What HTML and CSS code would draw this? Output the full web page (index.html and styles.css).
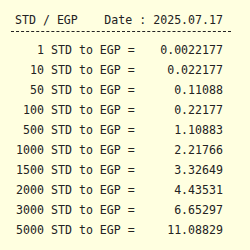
FILE: index.html
```html
<!DOCTYPE html>
<html>
<head>
<meta charset="utf-8">
<link rel="stylesheet" href="styles.css">
</head>
<body>
<div class="box">
  <div class="head">
    <span>STD / EGP</span>
    <span>Date : 2025.07.17</span>
  </div>
  <table class="rates">
    <tr><td class="amt">1</td><td class="lbl">STD to EGP =</td><td class="val">0.0022177</td></tr>
    <tr><td class="amt">10</td><td class="lbl">STD to EGP =</td><td class="val">0.022177</td></tr>
    <tr><td class="amt">50</td><td class="lbl">STD to EGP =</td><td class="val">0.11088</td></tr>
    <tr><td class="amt">100</td><td class="lbl">STD to EGP =</td><td class="val">0.22177</td></tr>
    <tr><td class="amt">500</td><td class="lbl">STD to EGP =</td><td class="val">1.10883</td></tr>
    <tr><td class="amt">1000</td><td class="lbl">STD to EGP =</td><td class="val">2.21766</td></tr>
    <tr><td class="amt">1500</td><td class="lbl">STD to EGP =</td><td class="val">3.32649</td></tr>
    <tr><td class="amt">2000</td><td class="lbl">STD to EGP =</td><td class="val">4.43531</td></tr>
    <tr><td class="amt">3000</td><td class="lbl">STD to EGP =</td><td class="val">6.65297</td></tr>
    <tr><td class="amt">5000</td><td class="lbl">STD to EGP =</td><td class="val">11.08829</td></tr>
  </table>
</div>
</body>
</html>
```
FILE: styles.css
```css
html, body {
  margin: 0;
  padding: 0;
  background: #ffffe0;
}
body {
  font-family: "DejaVu Sans Mono", monospace;
  font-size: 11.6px;
  color: #222;
}
.box {
  width: 220px;
  margin: 12px 0 0 11px;
}
.head {
  display: flex;
  justify-content: space-between;
  padding: 0 8px 3px 4px;
  line-height: 16px;
  border-bottom: 1px dashed #222;
}
.rates {
  border-collapse: collapse;
  width: 100%;
  margin-top: 8px;
}
.rates td {
  padding: 0;
  height: 20px;
  white-space: nowrap;
}
.amt {
  text-align: right;
  width: 33px;
}
.lbl {
  padding-left: 7px !important;
}
.val {
  text-align: right;
  padding-right: 8px !important;
}
```
